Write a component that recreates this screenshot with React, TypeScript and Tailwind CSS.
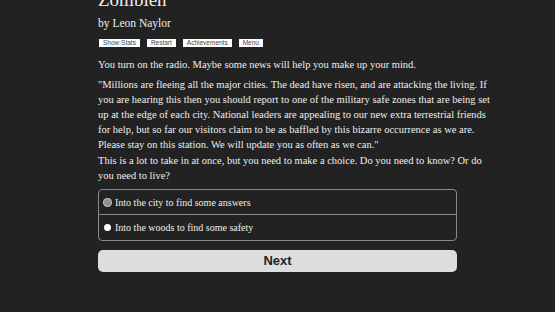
const quote = [
  '"Millions are fleeing all the major cities. The dead have risen, and are attacking the living. If',
  'you are hearing this then you should report to one of the military safe zones that are being set',
  'up at the edge of each city. National leaders are appealing to our new extra terrestrial friends',
  'for help, but so far our visitors claim to be as baffled by this bizarre occurrence as we are.',
  'Please stay on this station. We will update you as often as we can."',
];

const choice = [
  'This is a lot to take in at once, but you need to make a choice. Do you need to know? Or do',
  'you need to live?',
];

export default function App() {
  const buttons = ['Show Stats', 'Restart', 'Achievements', 'Menu'];
  return (
    <div className="min-h-[312px] w-full overflow-hidden bg-[#222222] text-[#eeeeee]" style={{ fontFamily: '"Liberation Serif", serif' }}>
      <div className="mx-auto w-[359px] -mt-[12px]">
        <h1 className="text-[19px] leading-[24px]">Zombien</h1>
        <h2 className="mt-[3px] text-[11.5px] leading-[16px]">by Leon Naylor</h2>
        <div className="mt-[8px] flex gap-[7px] pl-[1px]" style={{ fontFamily: '"Liberation Sans", sans-serif' }}>
          {buttons.map((b) => (
            <button key={b} className="h-[8px] bg-white px-[4px] text-[6.5px] leading-[8px] text-[#444444]">
              {b}
            </button>
          ))}
        </div>
        <div className="mt-[10px] text-[10.5px] leading-[15px]">
          <p>You turn on the radio. Maybe some news will help you make up your mind.</p>
          <p className="mt-[5px]">
            {quote.map((l) => (
              <span key={l} className="block whitespace-nowrap">{l}</span>
            ))}
          </p>
          <p className="mt-[1px]">
            {choice.map((l) => (
              <span key={l} className="block whitespace-nowrap">{l}</span>
            ))}
          </p>
        </div>
        <div className="mt-[6px] rounded-[4px] border border-[#8a8a8a] text-[10px]">
          <label className="flex h-[25px] items-center gap-[4px] border-b border-[#8a8a8a] px-[5px]">
            <span className="h-[7px] w-[7px] rounded-full bg-[#8f8f8f] ring-1 ring-[#c4c4c4]" />
            <span>Into the city to find some answers</span>
          </label>
          <label className="flex h-[25px] items-center gap-[4px] px-[5px]">
            <span className="h-[7px] w-[7px] rounded-full bg-white" />
            <span>Into the woods to find some safety</span>
          </label>
        </div>
        <button
          className="mt-[9px] h-[22px] w-full rounded-[5px] bg-[#dddddd] text-[13px] font-bold leading-[22px] text-[#222222]"
          style={{ fontFamily: '"Liberation Sans", sans-serif' }}
        >
          Next
        </button>
      </div>
    </div>
  );
}
